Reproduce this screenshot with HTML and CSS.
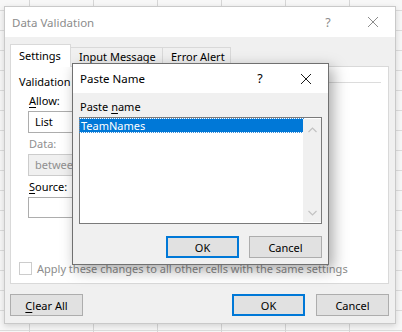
FILE: index.html
```html
<!DOCTYPE html>
<html lang="en">
<head>
    <meta charset="UTF-8">
    <title>Data Validation</title>
    <link rel="stylesheet" href="styles.css">
</head>
<body>
    <div class="dialog">
        <div class="titlebar">
            <span class="title">Data Validation</span>
            <span class="title-help">?</span>
            <svg class="title-close" width="12" height="12" viewBox="0 0 12 12"><path d="M1 1L11 11M11 1L1 11" stroke="#8c8c8c" stroke-width="1"/></svg>
        </div>
        <div class="body">
            <div class="tabs">
                <div class="tab active">Settings</div>
                <div class="tab">Input Message</div>
                <div class="tab">Error Alert</div>
            </div>
            <div class="panel">
                <div class="group">
                    <span>Validation criteria</span>
                    <span class="group-line"></span>
                </div>
                <div class="label"><u>A</u>llow:</div>
                <div class="combo">List</div>
                <div class="label disabled">Data:</div>
                <div class="combo disabled">between</div>
                <div class="label"><u>S</u>ource:</div>
                <div class="input"></div>
                <div class="check-row">
                    <span class="checkbox"></span>
                    <span>Apply these changes to all other cells with the same settings</span>
                </div>
            </div>
            <div class="buttons">
                <button class="btn"><u>C</u>lear All</button>
                <span class="spacer"></span>
                <button class="btn default">OK</button>
                <button class="btn">Cancel</button>
            </div>
        </div>
    </div>

    <div class="paste">
        <div class="paste-title">
            <span class="title">Paste Name</span>
            <span class="title-help">?</span>
            <svg class="title-close" width="12" height="12" viewBox="0 0 12 12"><path d="M1 1L11 11M11 1L1 11" stroke="#1a1a1a" stroke-width="1"/></svg>
        </div>
        <div class="paste-body">
            <div class="paste-label">Paste <u>n</u>ame</div>
            <div class="listbox">
                <div class="list-items">
                    <div class="list-item selected">TeamNames</div>
                </div>
                <div class="scrollbar">
                    <svg width="9" height="6" viewBox="0 0 9 6"><path d="M0.5 5L4.5 1L8.5 5" stroke="#c2c2c2" fill="none" stroke-width="1.2"/></svg>
                    <svg width="9" height="6" viewBox="0 0 9 6"><path d="M0.5 1L4.5 5L8.5 1" stroke="#c2c2c2" fill="none" stroke-width="1.2"/></svg>
                </div>
            </div>
            <div class="paste-buttons">
                <button class="btn default">OK</button>
                <button class="btn">Cancel</button>
            </div>
        </div>
    </div>
</body>
</html>
```

FILE: styles.css
```css
body {
    margin: 0;
    width: 402px;
    height: 332px;
    overflow: hidden;
    font-family: "Noto Sans", "Liberation Sans", sans-serif;
    font-size: 11px;
    color: #000;
    background-color: #f7f7f7;
    background-image:
        linear-gradient(to right, #d6d6d6 1px, transparent 1px),
        linear-gradient(to bottom, #dcdcdc 1px, transparent 1px);
    background-size: 64px 20px;
    background-position: 29px 10px;
}

u {
    text-decoration-thickness: 1px;
    text-underline-offset: 2px;
}

.dialog {
    margin: 6px 0 0 4px;
    width: 392px;
    height: 318px;
    display: flex;
    flex-direction: column;
    box-sizing: border-box;
    border: 1px solid #c9c9c9;
    box-shadow: 0 2px 6px rgba(0, 0, 0, 0.15);
    background: #f0f0f0;
}

.titlebar {
    height: 30px;
    background: #fff;
    display: flex;
    align-items: center;
    padding-left: 7px;
    color: #8c8c8c;
    font-size: 11.5px;
}

.title {
    flex: 1;
    white-space: nowrap;
}

.title-help {
    width: 20px;
    text-align: center;
    margin-right: 29px;
    font-size: 12.5px;
}

.title-close {
    margin-right: 16px;
}

.body {
    flex: 1;
    display: flex;
    flex-direction: column;
    padding: 7px 6px 7px 5px;
}

.tabs {
    display: flex;
    align-items: flex-end;
    height: 22px;
}

.tab {
    height: 19px;
    line-height: 18px;
    padding: 0 0 0 8px;
    border: 1px solid #d9d9d9;
    border-bottom: none;
    background: #f0f0f0;
    box-sizing: border-box;
    white-space: nowrap;
}

.tab.active {
    height: 23px;
    line-height: 21px;
    background: #fff;
    margin-bottom: -1px;
    position: relative;
    z-index: 1;
    width: 61px;
}

.tab + .tab {
    border-left: none;
}

.tab:nth-child(2) {
    width: 92px;
}

.tab:nth-child(3) {
    width: 68px;
}

.panel {
    height: 218px;
    box-sizing: border-box;
    background: #fff;
    border: 1px solid #d9d9d9;
    padding: 7px 7px 7px 8px;
    display: flex;
    flex-direction: column;
    align-items: flex-start;
}

.group {
    display: flex;
    align-items: center;
    width: 100%;
    height: 16px;
    line-height: 16px;
}

.group-line {
    flex: 1;
    height: 1px;
    background: #dcdcdc;
    margin-left: 4px;
}

.label {
    height: 16px;
    line-height: 16px;
    margin: 3px 0 0 10px;
}

.label.disabled {
    color: #8f8f8f;
}

.combo {
    margin: 2px 0 0 9px;
    width: 150px;
    height: 22px;
    line-height: 20px;
    box-sizing: border-box;
    border: 1px solid #adadad;
    padding-left: 6px;
}

.combo.disabled {
    background: #f0f0f0;
    border-color: #cccccc;
    color: #8f8f8f;
}

.input {
    margin: 2px 0 0 9px;
    width: 200px;
    height: 21px;
    box-sizing: border-box;
    border: 1px solid #adadad;
}

.check-row {
    margin-top: auto;
    display: flex;
    align-items: center;
    height: 16px;
    color: #8c8c8c;
}

.checkbox {
    width: 13px;
    height: 13px;
    box-sizing: border-box;
    border: 1px solid #cccccc;
    margin-right: 5px;
}

.buttons {
    display: flex;
    margin-top: 10px;
    gap: 11px;
}

.spacer {
    flex: 1;
}

.btn {
    width: 73px;
    height: 22px;
    box-sizing: border-box;
    border: 1px solid #adadad;
    background: #e1e1e1;
    font-family: inherit;
    font-size: 11px;
    color: #000;
    padding: 0;
}

.btn.default {
    border: 2px solid #0078d7;
}

.paste {
    position: absolute;
    left: 72px;
    top: 63px;
    width: 257px;
    height: 202px;
    box-sizing: border-box;
    border: 1px solid #707070;
    background: #f0f0f0;
    box-shadow: 4px 5px 14px rgba(0, 0, 0, 0.35);
    display: flex;
    flex-direction: column;
}

.paste-title {
    height: 29px;
    background: #fff;
    display: flex;
    align-items: center;
    padding-left: 7px;
    font-size: 11.5px;
}

.paste-title .title-help {
    margin-right: 30px;
}

.paste-title .title-close {
    margin-right: 16px;
}

.paste-body {
    flex: 1;
    padding: 6px 6px 0 6px;
    display: flex;
    flex-direction: column;
}

.paste-label {
    height: 16px;
    line-height: 16px;
    padding-left: 1px;
}

.listbox {
    margin-top: 2px;
    height: 107px;
    box-sizing: border-box;
    border: 1px solid #7a7a7a;
    background: #fff;
    display: flex;
    padding: 1px 0 1px 0;
}

.list-items {
    flex: 1;
}

.list-item {
    height: 13px;
    line-height: 13px;
    padding-left: 1px;
}

.list-item.selected {
    background: #0078d7;
    color: #fff;
    outline: 1px dotted #3a8fd9;
}

.scrollbar {
    width: 18px;
    background: #f0f0f0;
    display: flex;
    flex-direction: column;
    align-items: center;
    justify-content: space-between;
    padding: 8px 0 6px;
}

.paste-buttons {
    display: flex;
    justify-content: flex-end;
    gap: 10px;
    margin-top: 12px;
}
```
